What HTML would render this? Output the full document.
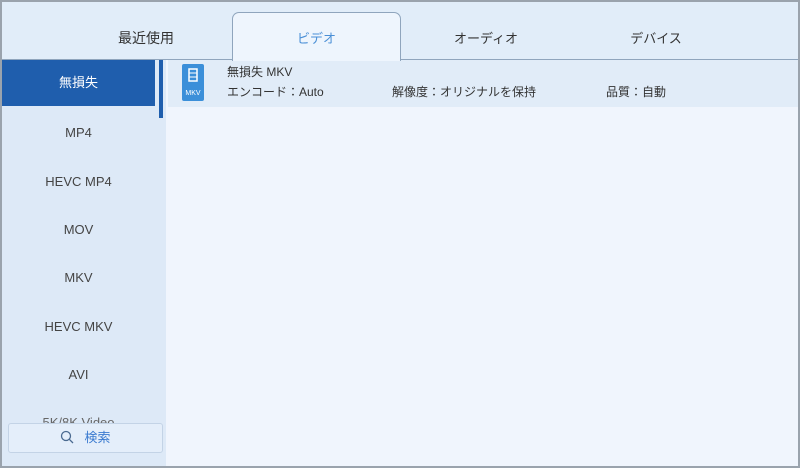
<!DOCTYPE html>
<html><head><meta charset="utf-8"><style>
*{margin:0;padding:0;box-sizing:border-box}
body{width:800px;height:468px;overflow:hidden;background:#f0f5fd;font-family:"Liberation Sans","Noto Sans CJK JP",sans-serif;position:relative}
.frame{position:absolute;inset:0;border:2px solid #9aa3ad;pointer-events:none;z-index:9}
.head{position:absolute;left:0;top:0;width:800px;height:60px;background:#e1edf9;border-bottom:1px solid #8fa5bd}
.tab{position:absolute;top:28px;font-size:14px;color:#333;transform:translateX(-50%)}
.vtab{position:absolute;left:232px;top:12px;width:169px;height:49px;background:#eef5fd;border:1px solid #8fa5bd;border-bottom:none;border-radius:7px 7px 0 0;z-index:2}
.vtab span{position:absolute;left:0;right:0;top:15px;text-align:center;color:#4a8fd6;font-size:13px}
.side{position:absolute;left:0;top:60px;width:166px;height:408px;background:#dde9f7;overflow:hidden}
.item{position:absolute;left:2px;width:153px;height:46px;line-height:46px;text-align:center;font-size:13px;color:#444}
.sel{background:#1f5ead;color:#fff}
.thumb{position:absolute;left:159px;top:60px;width:4px;height:58px;background:#1f5ead}
.row{position:absolute;left:168px;top:60px;width:632px;height:47px;background:#e1ecf8}
.icon{position:absolute;left:182px;top:64px;width:22px;height:37px;background:#3b8fd9;border-radius:2px}
.t{position:absolute;font-size:12px;color:#333;white-space:nowrap}
.search{position:absolute;left:8px;top:423px;width:155px;height:30px;border:1px solid #c3d3e6;border-radius:3px;background:#e4eefa;text-align:center;line-height:28px;color:#3b7bd0;font-size:13px;z-index:3}
</style></head><body>
<div class="head"></div>
<div class="tab" style="left:146px">最近使用</div>
<div class="tab" style="left:486px;font-size:13px">オーディオ</div>
<div class="tab" style="left:656px;font-size:13px">デバイス</div>
<div class="vtab"><span>ビデオ</span></div>
<div class="side">
<div class="item sel" style="top:0">無損失</div>
<div class="item" style="top:50px">MP4</div>
<div class="item" style="top:99px">HEVC MP4</div>
<div class="item" style="top:147px">MOV</div>
<div class="item" style="top:195px">MKV</div>
<div class="item" style="top:244px">HEVC MKV</div>
<div class="item" style="top:292px">AVI</div>
<div class="item" style="top:340px;color:#666">5K/8K Video</div>
</div>
<div class="thumb"></div>
<div class="row"></div>
<div class="icon">
<svg width="22" height="37" viewBox="0 0 22 37"><rect x="7" y="5" width="8" height="12" fill="none" stroke="#fff" stroke-width="1.5"/><line x1="7" y1="9" x2="15" y2="9" stroke="#fff"/><line x1="7" y1="13" x2="15" y2="13" stroke="#fff"/><text x="11" y="31" font-size="7" fill="#fff" text-anchor="middle" font-family="Liberation Sans">MKV</text></svg>
</div>
<div class="t" style="left:227px;top:63px">無損失 MKV</div>
<div class="t" style="left:227px;top:83px">エンコード：Auto</div>
<div class="t" style="left:392px;top:83px">解像度：オリジナルを保持</div>
<div class="t" style="left:606px;top:83px">品質：自動</div>
<div class="search"><svg width="14" height="14" viewBox="0 0 14 14" style="vertical-align:-2px;margin-right:10px"><circle cx="6" cy="6" r="4.5" fill="none" stroke="#4a6a90" stroke-width="1.3"/><line x1="9.3" y1="9.3" x2="13" y2="13" stroke="#4a6a90" stroke-width="1.3"/></svg>検索</div>
<div class="frame"></div>
</body></html>
